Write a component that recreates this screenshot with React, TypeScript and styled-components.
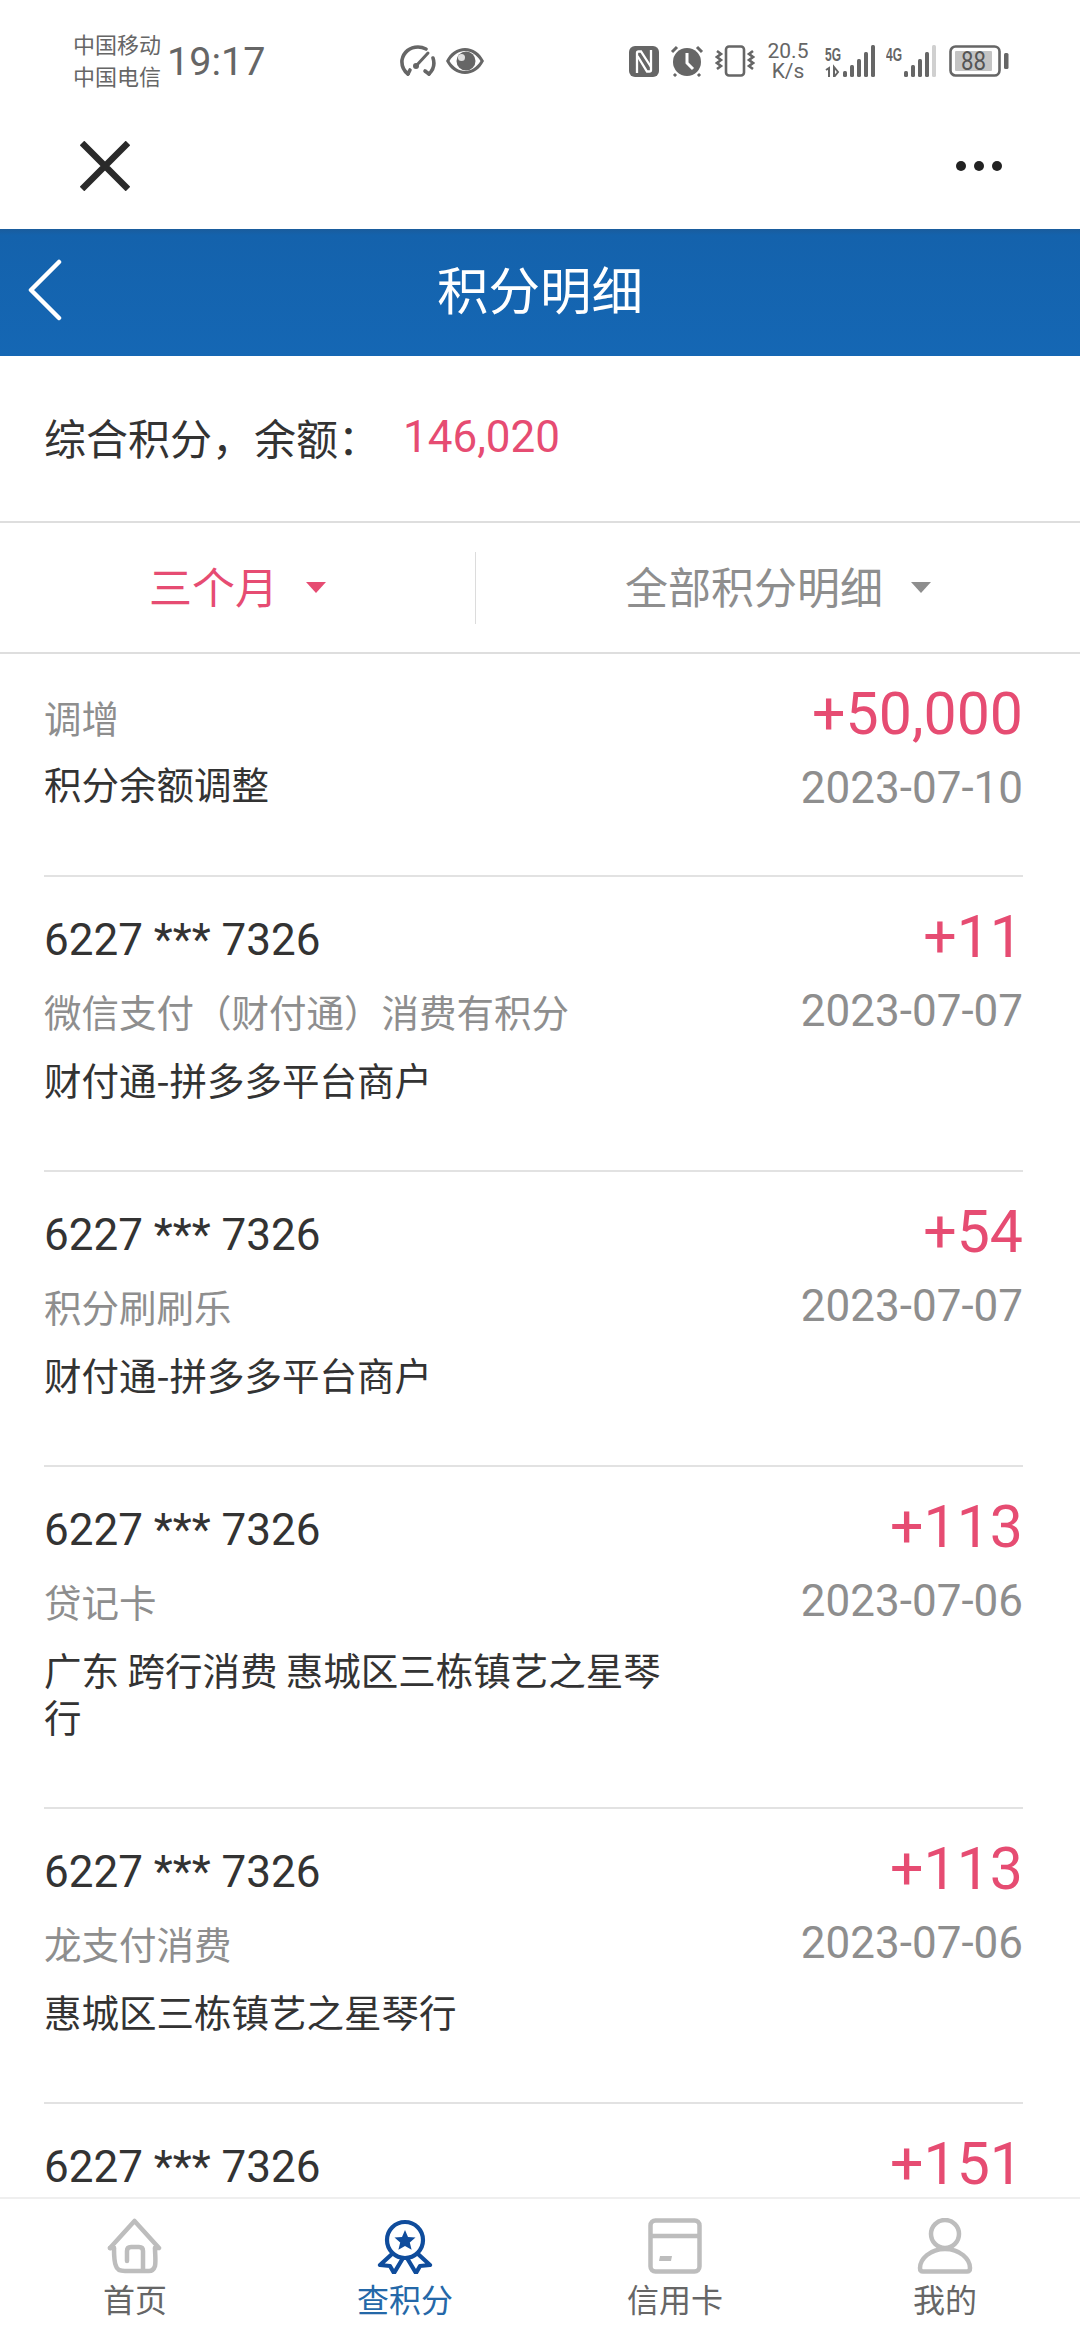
import React from "react";
import styled, { createGlobalStyle } from "styled-components";

const Global = createGlobalStyle`
  html, body { margin: 0; padding: 0; background: #fff; }
  body { font-family: Roboto, "Noto Sans CJK SC", sans-serif; }
  * { box-sizing: border-box; }
`;

const Page = styled.div`
  width: 1080px;
  height: 2340px;
  display: flex;
  flex-direction: column;
  overflow: hidden;
  background: #fff;
`;

const StatusBar = styled.div`
  height: 110px;
  padding: 30px 0 0 73px;
  display: flex;
  align-items: flex-start;
  color: #666;
`;
const Carrier = styled.div`
  width: 94px;
  font-size: 22px;
  line-height: 32px;
`;
const Clock = styled.div`
  width: 233px;
  font-size: 39.500px;
  line-height: 64px;
`;
const StatusIcons = styled.div`
  display: flex;
  align-items: center;
  height: 62px;
  gap: 10px;
`;
const RightIcons = styled(StatusIcons)`
  margin-left: 145px;
  gap: 11px;
`;
const Speed = styled.div`
  width: 44px;
  font-size: 21px;
  line-height: 20px;
  text-align: center;
  margin-right: 4px;
`;
const BatteryFrame = styled.svg`
  margin-left: 2px;
`;
const ToolBar = styled.div`
  height: 119px;
  padding: 0 78px 8px 80px;
  display: flex;
  align-items: center;
  justify-content: space-between;
`;

const Header = styled.div`
  height: 127px;
  position: relative;
  display: flex;
  align-items: center;
  justify-content: center;
  padding-bottom: 10px;
  background: linear-gradient(#1a5c9c 0, #1462ac 6px, #1567b4 100%);
  color: #fff;
  font-size: 51.500px;
`;
const Back = styled.svg`
  position: absolute;
  left: 27px;
  top: 30px;
`;

const Summary = styled.div`
  height: 167px;
  padding: 0 0 4px 44px;
  display: flex;
  align-items: center;
  font-size: 42px;
  color: #333;
  border-bottom: 2px solid #dedede;
`;
const Balance = styled.span`
  color: #e64c72;
  font-size: 44px;
  margin-left: 23px;
`;

const Filter = styled.div`
  height: 131px;
  display: grid;
  grid-template-columns: 475px 1fr;
  align-items: center;
  border-bottom: 2px solid #dedede;
`;
const FilterCell = styled.div<{ $active?: boolean; $divided?: boolean }>`
  height: 72px;
  padding-bottom: 5px;
  display: flex;
  align-items: center;
  justify-content: center;
  gap: 28px;
  font-size: 43px;
  color: ${(p) => (p.$active ? "#e64c72" : "#8e8e8e")};
  border-left: ${(p) => (p.$divided ? "1px solid #dcdcdc" : "none")};
`;
const Caret = styled.i<{ $active?: boolean }>`
  width: 0;
  height: 0;
  margin-top: 5px;
  border-left: 10px solid transparent;
  border-right: 10px solid transparent;
  border-top: 11px solid ${(p) => (p.$active ? "#e64c72" : "#8e8e8e")};
`;

const List = styled.div`
  flex: 1;
  min-height: 0;
  overflow: hidden;
  padding: 0 57px 0 44px;
`;
const Row = styled.div<{ $plain?: boolean }>`
  display: flex;
  justify-content: space-between;
  padding: ${(p) => (p.$plain ? "43px 0 63px" : "39px 0 68px")};
  border-bottom: 2px solid #e2e2e2;
  &:last-child { border-bottom: none; }
`;
const LeftCol = styled.div`
  width: 625px;
`;
const RightCol = styled.div<{ $plain?: boolean }>`
  display: flex;
  flex-direction: column;
  align-items: flex-end;
  margin-top: ${(p) => (p.$plain ? "-4px" : "0")};
`;
const Card = styled.div`
  font-size: 44px;
  line-height: 48px;
  color: #333;
  margin-bottom: 27px;
`;
const Kind = styled.div<{ $plain?: boolean }>`
  font-size: 37.500px;
  line-height: 47px;
  color: #8e8e8e;
  margin-bottom: ${(p) => (p.$plain ? "15px" : "17px")};
`;
const Desc = styled.div`
  font-family: "Noto Sans CJK SC", sans-serif;
  font-size: 37.500px;
  line-height: 47px;
  color: #333;
`;
const Amount = styled.div`
  font-size: 59px;
  line-height: 64px;
  color: #e64c72;
  margin-top: -11px;
`;
const DateText = styled.div`
  font-size: 44px;
  line-height: 47px;
  color: #8e8e8e;
  margin-top: 19px;
`;

const Nav = styled.div`
  height: 143px;
  flex-shrink: 0;
  display: grid;
  grid-template-columns: repeat(4, 1fr);
  border-top: 2px solid #efefef;
  background: #fff;
  padding-top: 19px;
`;
const NavItem = styled.div<{ $active?: boolean }>`
  display: flex;
  flex-direction: column;
  align-items: center;
  font-size: 32px;
  line-height: 46px;
  gap: 4px;
  color: ${(p) => (p.$active ? "#2468a8" : "#666")};
`;

const Gauge = () => (
  <svg width="36" height="32" viewBox="0 0 36 32" fill="none" stroke="#666" strokeWidth="3.600" strokeLinecap="round">
    <path d="M8 29C3 25 1.500 20 2 15 3.500 7 10 2 18 2c3 0 6 1 8 2" />
    <path d="M33 13c2 6 0 12-4 16" />
    <path d="M29 29l-4-3" />
    <path d="M8 29l2-4" />
    <path d="M16 21l12-13" strokeWidth="3" />
    <circle cx="16" cy="21" r="3" fill="#666" stroke="none" />
  </svg>
);
const Eye = () => (
  <svg width="38" height="26" viewBox="0 0 38 26">
    <path fill="#666" d="M19 0C11 0 4 5 0 13c4 8 11 13 19 13s15-5 19-13C34 5 27 0 19 0zm0 3c6 0 12 4 15.500 10-3.500 6-9.500 10-15.500 10S7 19 3.500 13C7 7 13 3 19 3z" />
    <circle cx="20" cy="13" r="9.500" fill="#666" />
    <circle cx="15.500" cy="9.500" r="3.500" fill="#fff" opacity=".8" />
  </svg>
);
const Nfc = () => (
  <svg width="30" height="31" viewBox="0 0 30 31">
    <rect width="30" height="31" rx="6" fill="#666" />
    <path d="M8 27V7c0-1 .7-1.500 1.500-1.500H12L22 21" stroke="#fff" strokeWidth="2.300" fill="none" />
    <path d="M22 4v20c0 1-.7 1.500-1.500 1.500H18L8.500 10" stroke="#fff" strokeWidth="2.300" fill="none" />
  </svg>
);
const Alarm = () => (
  <svg width="34" height="32" viewBox="0 0 34 32">
    <circle cx="17" cy="17" r="14" fill="#666" />
    <path d="M17 8v10l6 6" stroke="#fff" strokeWidth="3" fill="none" />
    <path d="M2 7l5-5M32 7l-5-5M6 29l-2 2M28 29l2 2" stroke="#666" strokeWidth="3" fill="none" />
  </svg>
);
const Vibrate = () => (
  <svg width="40" height="32" viewBox="0 0 40 32" fill="none" stroke="#666" strokeWidth="2.600">
    <rect x="11" y="1.500" width="18" height="29" rx="3" />
    <path d="M2 6l4 3-4 3 4 3-4 3 4 3-4 3" />
    <path d="M38 6l-4 3 4 3-4 3 4 3-4 3 4 3" />
  </svg>
);
const Signal = ({ label, arrows, dim }: { label: string; arrows?: boolean; dim?: boolean }) => (
  <svg width="50" height="32" viewBox="0 0 50 32">
    <text x="0" y="16" fontFamily="Liberation Sans" fontWeight="700" fontSize="19" fill="#666" textLength="16" lengthAdjust="spacingAndGlyphs">{label}</text>
    {arrows && <path d="M1 25l3-2v9M9 22v10l4-5z" stroke="#666" strokeWidth="2" fill="none" />}
    <rect x="18" y="26" width="4" height="6" rx="1.500" fill="#666" />
    <rect x="25" y="20" width="4" height="12" rx="1.500" fill="#666" />
    <rect x="32" y="14" width="4" height="18" rx="1.500" fill="#666" />
    <rect x="39" y="7" width="4" height="25" rx="1.500" fill="#666" />
    <rect x="46" y="0" width="4" height="32" rx="1.500" fill={dim ? "#d0d0d0" : "#666"} />
  </svg>
);
const Battery = () => (
  <BatteryFrame width="60" height="32" viewBox="0 0 60 32">
    <rect x="1.500" y="1.500" width="49" height="29" rx="5" fill="none" stroke="#666" strokeWidth="2.600" />
    <rect x="6" y="6" width="37" height="20" rx="1" fill="#c4c4c4" />
    <text x="12" y="25" fontFamily="Roboto" fontSize="26" fill="#555" textLength="25" lengthAdjust="spacingAndGlyphs">88</text>
    <rect x="55" y="8" width="4.500" height="16" rx="1.500" fill="#666" />
  </BatteryFrame>
);
const Close = () => (
  <svg width="50" height="50" viewBox="0 0 50 50" stroke="#2a2a2a" strokeWidth="6.500">
    <path d="M2 2l46 46M48 2L2 48" />
  </svg>
);
const Dots = () => (
  <svg width="46" height="12" viewBox="0 0 46 12" fill="#222">
    <circle cx="5" cy="6" r="5" />
    <circle cx="23" cy="6" r="5" />
    <circle cx="41" cy="6" r="5" />
  </svg>
);
const HomeIcon = () => (
  <svg width="56" height="56" viewBox="0 0 56 56" fill="none" stroke="#bdbdbd" strokeWidth="4.500" strokeLinejoin="round" strokeLinecap="round">
    <path d="M3 30L27.500 3 52 30h-4" />
    <path d="M7 30c0 8 0 14 2 18 1 4 4 5 9 5h24c3 0 5-2 6-5 1-5 0-12 0-18" />
    <path d="M20 43V33c0-3 2-4 4-4h8c2 0 4 1 4 4v18" />
    <path d="M3 30h4" />
  </svg>
);
const BadgeIcon = () => (
  <svg width="56" height="56" viewBox="0 0 56 56">
    <g fill="none" stroke="#0f4c9c" strokeWidth="4.200" strokeLinejoin="round">
      <circle cx="28" cy="22" r="18" />
      <path d="M15 36L3 47l10 1 4 7 9-15" />
      <path d="M41 36l12 11-10 1-4 7-9-15" />
    </g>
    <path fill="#0f4c9c" d="M28 12l3 7 7.500.6-5.700 4.900 1.800 7.300L28 28l-6.600 3.800 1.800-7.300-5.700-4.900L25 19z" />
  </svg>
);
const CardIcon = () => (
  <svg width="54" height="56" viewBox="0 0 54 56">
    <rect x="2.500" y="2.500" width="49" height="51" rx="5" fill="none" stroke="#bdbdbd" strokeWidth="4.500" />
    <path d="M2 18h50" stroke="#bdbdbd" strokeWidth="4.500" />
    <path d="M12 38h12l-1 5H11z" fill="#bdbdbd" />
  </svg>
);
const UserIcon = () => (
  <svg width="56" height="56" viewBox="0 0 56 56" fill="none" stroke="#bdbdbd" strokeWidth="4.500" strokeLinejoin="round">
    <circle cx="28" cy="16" r="14" />
    <path d="M3 50c0-9 10-19 25-19s25 10 25 19c0 2-1 3.500-3 3.500H6c-2 0-3-1.500-3-3.500z" />
  </svg>
);

const rows = [
  { kind: "调增", desc: "积分余额调整", amount: "+50,000", date: "2023-07-10" },
  { card: "6227 *** 7326", kind: "微信支付（财付通）消费有积分", desc: "财付通-拼多多平台商户", amount: "+11", date: "2023-07-07" },
  { card: "6227 *** 7326", kind: "积分刷刷乐", desc: "财付通-拼多多平台商户", amount: "+54", date: "2023-07-07" },
  { card: "6227 *** 7326", kind: "贷记卡", desc: "广东 跨行消费 惠城区三栋镇艺之星琴行", amount: "+113", date: "2023-07-06" },
  { card: "6227 *** 7326", kind: "龙支付消费", desc: "惠城区三栋镇艺之星琴行", amount: "+113", date: "2023-07-06" },
  { card: "6227 *** 7326", kind: "", desc: "", amount: "+151", date: "" },
];

export default function App() {
  return (
    <Page>
      <Global />
      <StatusBar>
        <Carrier>中国移动<br />中国电信</Carrier>
        <Clock>19:17</Clock>
        <StatusIcons><Gauge /><Eye /></StatusIcons>
        <RightIcons>
          <Nfc /><Alarm /><Vibrate />
          <Speed>20.5<br />K/s</Speed>
          <Signal label="5G" arrows />
          <Signal label="4G" dim />
          <Battery />
        </RightIcons>
      </StatusBar>
      <ToolBar><Close /><Dots /></ToolBar>
      <Header>
        <Back width="36" height="62" viewBox="0 0 36 62" fill="none" stroke="#fff" strokeWidth="4.500" strokeLinecap="round" strokeLinejoin="round">
          <path d="M32 3L4 31l28 28" />
        </Back>
        积分明细
      </Header>
      <Summary>综合积分，余额：<Balance>146,020</Balance></Summary>
      <Filter>
        <FilterCell $active>三个月<Caret $active /></FilterCell>
        <FilterCell $divided>全部积分明细<Caret /></FilterCell>
      </Filter>
      <List>
        {rows.map((r, i) => (
          <Row key={i} $plain={!r.card}>
            <LeftCol>
              {r.card && <Card>{r.card}</Card>}
              {r.kind && <Kind $plain={!r.card}>{r.kind}</Kind>}
              {r.desc && <Desc>{r.desc}</Desc>}
            </LeftCol>
            <RightCol $plain={!r.card}>
              <Amount>{r.amount}</Amount>
              {r.date && <DateText>{r.date}</DateText>}
            </RightCol>
          </Row>
        ))}
      </List>
      <Nav>
        <NavItem><HomeIcon />首页</NavItem>
        <NavItem $active><BadgeIcon />查积分</NavItem>
        <NavItem><CardIcon />信用卡</NavItem>
        <NavItem><UserIcon />我的</NavItem>
      </Nav>
    </Page>
  );
}
